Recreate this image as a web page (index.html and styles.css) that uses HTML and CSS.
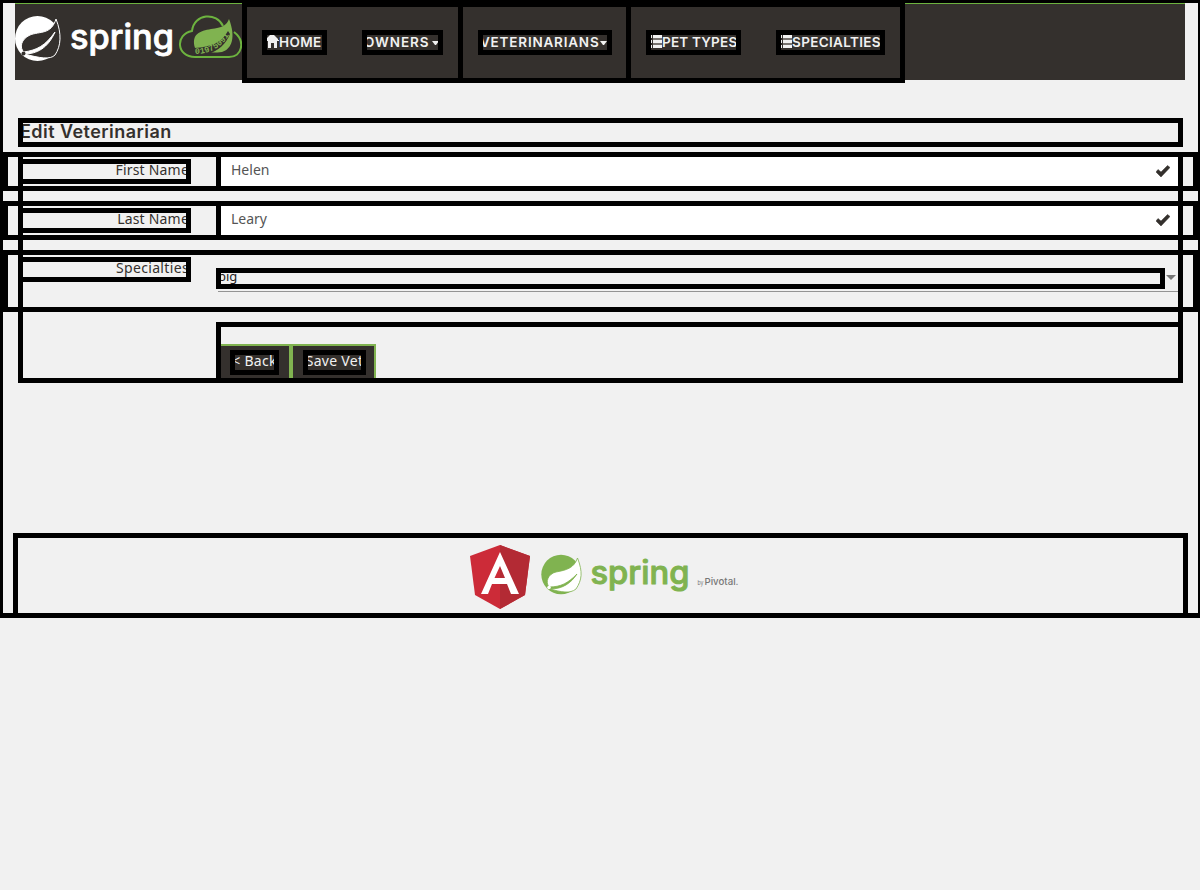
FILE: index.html
```html
<!DOCTYPE html>
<html lang="en">
<head>
<meta charset="utf-8">
<title>Edit Veterinarian</title>
<link rel="stylesheet" href="styles.css">
</head>
<body>
<div class="page">
  <header class="navbar">
    <svg class="brand" viewBox="0 0 227 76" width="227" height="76">
      <circle cx="22.5" cy="34.5" r="22.5" fill="#fff"/>
      <path d="M41 15C47 30 46 42 40 51C35 56 25 54 9 50C22 50 33 44 40 28C30 42 22 46 9 48C4 44 6 35 15 31C25 27 36 31 41 15Z" fill="#34302d" stroke="#fff" stroke-width="1"/>
      <circle cx="8.500" cy="49.500" r="2" fill="#34302d"/>
      <text x="55" y="44.500" class="brand-word" textLength="104" lengthAdjust="spacingAndGlyphs">spring</text>
      <path d="M180 53C161 53 160 30 177 27C179 9 202 8 208 22M219 28C231 37 227 53 214 53H180" fill="none" stroke="#6db33f" stroke-width="2"/>
      <path d="M180 44C176 30 185 27 196 25C207 24 212 21 214 15C221 33 217 45 207 48C197 49 188 49 180 44Z" fill="#80b350"/>
      <path d="M179 44C197 43 207 38 213 27L215 30C211 40 203 47 193 50H179Z" fill="#34302d"/>
      <path id="bits" d="M180 50C195 50 208 43 215 29" fill="none"/>
      <text class="brand-bits"><textPath href="#bits">01975091</textPath></text>
    </svg>
    <nav class="menu">
      <div class="group first">
        <a class="item home"><svg width="12" height="13" viewBox="0 0 12 13"><path d="M0 6V3L3 0H7L11 4V5H12V6H10V13H7V8H4V13H1V6Z" fill="#f1f1f1"/></svg><span>HOME</span></a>
        <a class="item owners"><span>OWNERS</span><i class="caret"></i></a>
      </div>
      <div class="group second">
        <a class="item vets"><span>VETERINARIANS</span><i class="caret"></i></a>
      </div>
      <div class="group third">
        <a class="item types"><svg width="11" height="13" viewBox="0 0 11 13"><path d="M2 0H11V3H2ZM2 5H11V8H2ZM2 10H11V13H2ZM0 0H1V3H0ZM0 5H1V8H0ZM0 10H1V13H0Z" fill="#f1f1f1"/><path d="M2 3H11V5H2ZM2 8H11V10H2Z" fill="#77736f"/></svg><span>PET TYPES</span></a>
        <a class="item specs"><svg width="11" height="13" viewBox="0 0 11 13"><path d="M2 0H11V3H2ZM2 5H11V8H2ZM2 10H11V13H2ZM0 0H1V3H0ZM0 5H1V8H0ZM0 10H1V13H0Z" fill="#f1f1f1"/><path d="M2 3H11V5H2ZM2 8H11V10H2Z" fill="#77736f"/></svg><span>SPECIALTIES</span></a>
      </div>
    </nav>
  </header>
  <main>
    <h2 class="title framed"><span>Edit Veterinarian</span></h2>
    <form class="form framed">
      <div class="row framed">
        <label class="framed"><span class="l-first">First Name</span></label>
        <div class="field framed"><span class="v-first">Helen</span><svg width="14" height="12" viewBox="0 0 14 12"><path d="M0 7L2 4.500L5 7L11.500 0.500L14 2.500L5 12Z" fill="#34302d" stroke="#34302d" stroke-width=".5"/></svg></div>
      </div>
      <div class="row framed">
        <label class="framed"><span class="l-last">Last Name</span></label>
        <div class="field framed"><span class="v-last">Leary</span><svg width="14" height="12" viewBox="0 0 14 12"><path d="M0 7L2 4.500L5 7L11.500 0.500L14 2.500L5 12Z" fill="#34302d" stroke="#34302d" stroke-width=".5"/></svg></div>
      </div>
      <div class="row tall framed">
        <label class="framed"><span class="l-spec">Specialties</span></label>
        <div class="select"><div class="value framed"><span>big</span></div><i class="arrow"></i></div>
      </div>
      <div class="actions framed">
        <a class="button back"><span class="framed"><b>&lt; Back</b></span></a>
        <a class="button save"><span class="framed"><b>Save Vet</b></span></a>
      </div>
    </form>
  </main>
  <footer class="footer framed">
    <svg width="60" height="64" viewBox="0 0 60 64">
      <path d="M30 0L60 11L55 50L30 64L5 50L0 11Z" fill="#cc2b38"/>
      <path d="M30 0L60 11L55 50L30 64Z" fill="#b32a34"/>
      <path d="M30 7L49 49H41L37 39H22L18 49H11ZM30 21L24.500 33H35Z" fill="#fff" fill-rule="evenodd"/>
    </svg>
    <svg class="spring" width="200" height="64" viewBox="0 0 200 64">
      <circle cx="20" cy="29.500" r="19.700" fill="#80b350"/>
      <path d="M36.500 13C42 27 41 35 35 44C29 49 20 47 9 44C22 44 30 38 36 29C27 38 20 42 8 42C4 37 7 29 15 27C26 25 33 23 36.500 13Z" fill="#fff" stroke="#80b350" stroke-width=".8"/>
      <circle cx="8" cy="42.500" r="1.800" fill="#fff"/>
      <text x="49.500" y="39" class="foot-word" textLength="99" lengthAdjust="spacingAndGlyphs">spring</text>
      <text x="156.500" y="39.500" class="by" textLength="6" lengthAdjust="spacingAndGlyphs">by</text>
      <text x="163.500" y="39.500" class="pivotal" textLength="34" lengthAdjust="spacingAndGlyphs">Pivotal.</text>
    </svg>
  </footer>
</div>
</body>
</html>
```
FILE: styles.css
```css
* { box-sizing: border-box; }
body { margin: 0; background: #f1f1f1; color: #34302d; font: 14px/20px "Noto Sans", sans-serif; }
svg { display: block; flex: none; }
span, b { white-space: nowrap; }
b { font-weight: 400; }
.framed { outline: 5px solid #000; outline-offset: -5px; }
.page { width: 1200px; height: 618px; border: solid #000; border-width: 3px 2px 5px 3px; }

.navbar { display: flex; height: 77px; margin: 0 13px 0 12px; background: #34302d; border-top: 1px solid #6db33f; }
.brand-word { font: 500 34px Inter, sans-serif; fill: #fff; stroke: #fff; stroke-width: .8px; stroke-linejoin: round; }
.brand-bits { font: 700 8.500px "Liberation Mono", monospace; fill: #80b350; }
.menu { display: flex; width: 663px; height: 80px; margin-top: -1px; background: #34302d; border: solid #000; border-width: 4px 5px 5px; }
.group { display: flex; gap: 35px; padding: 23px 15px 0; }
.first { width: 216px; border-right: 5px solid #000; }
.second { width: 168px; border-right: 5px solid #000; }
.group.third { width: 269px; }
.item { display: flex; flex: none; height: 25px; outline: 5px solid #000; outline-offset: -5px; color: #f1f1f1; font: 600 13.500px/24px Inter, sans-serif; }
.item svg { margin: 5px 0 0; }
.home { width: 65px; padding-left: 5px; letter-spacing: .4px; }
.owners { width: 81px; padding-left: 2px; letter-spacing: .9px; }
.owners span { width: 66px; }
.vets { width: 134px; padding-left: 2px; letter-spacing: .8px; }
.vets span { width: 118px; }
.types { width: 95px; padding-left: 5px; letter-spacing: .2px; }
.specs { width: 109px; padding-left: 5px; letter-spacing: .35px; }
.caret { width: 7px; height: 4px; margin: 11px 0 0 2px; border: solid transparent; border-width: 4px 3.5px 0; border-top-color: #f1f1f1; }

.title { width: 1165px; height: 29px; margin: 38px 0 0 15px; padding-left: 2px; font: 600 18px/28px Inter, sans-serif; letter-spacing: .45px; }
.form { width: 1165px; height: 231px; margin: 5px 0 0 15px; }
.row { display: flex; width: 1195px; height: 39px; margin: 0 0 10px -15px; padding: 0 15px; }
.tall { height: 62px; }
label { display: block; flex: none; width: 173px; height: 25px; margin: 7px 25px 0 0; padding-right: 2px; line-height: 21px; text-align: right; letter-spacing: .2px; }
.l-spec { letter-spacing: .35px; }
.field { display: flex; flex: none; justify-content: space-between; width: 967px; background: #fff; color: #555; padding: 0 13px 0 15px; line-height: 35px; }
.field svg { margin-top: 13px; }
.select { display: flex; width: 967px; height: 42px; padding-top: 18px; margin-right: 0; background: linear-gradient(#949494, #949494) 2px 41px / 960px 1px no-repeat; }
.value { width: 949px; height: 21px; padding-left: 2px; line-height: 17px; color: #212121; font-size: 13px; }
.arrow { width: 10px; height: 5px; margin: 7px 0 0 1px; border: solid transparent; border-width: 5px 5px 0; border-top-color: #757575; }
.actions { display: flex; width: 967px; height: 61px; margin-left: 198px; padding: 22px 0 5px 3px; }
.button { height: 34px; border: 2px solid #80b350; border-bottom: 0; background: #34302d; color: #f1f1f1; padding: 4px 9px 0; }
.back { width: 72px; }
.save { width: 85px; padding-left: 10px; }
.button span { display: block; height: 25px; line-height: 22px; text-align: center; letter-spacing: .3px; }
.back span { width: 49px; }
.save span { width: 63px; }

.footer { display: flex; width: 1175px; height: 85px; margin: 150px 0 0 10px; padding: 12px 0 0 457px; }
.spring { margin: 0 0 0 11px; }
.foot-word { font: 500 32px Inter, sans-serif; fill: #80b350; stroke: #80b350; stroke-width: 1px; stroke-linejoin: round; }
.by { font: 6px Inter, sans-serif; fill: #777; }
.pivotal { font: 500 9.500px Inter, sans-serif; fill: #777; }
```
